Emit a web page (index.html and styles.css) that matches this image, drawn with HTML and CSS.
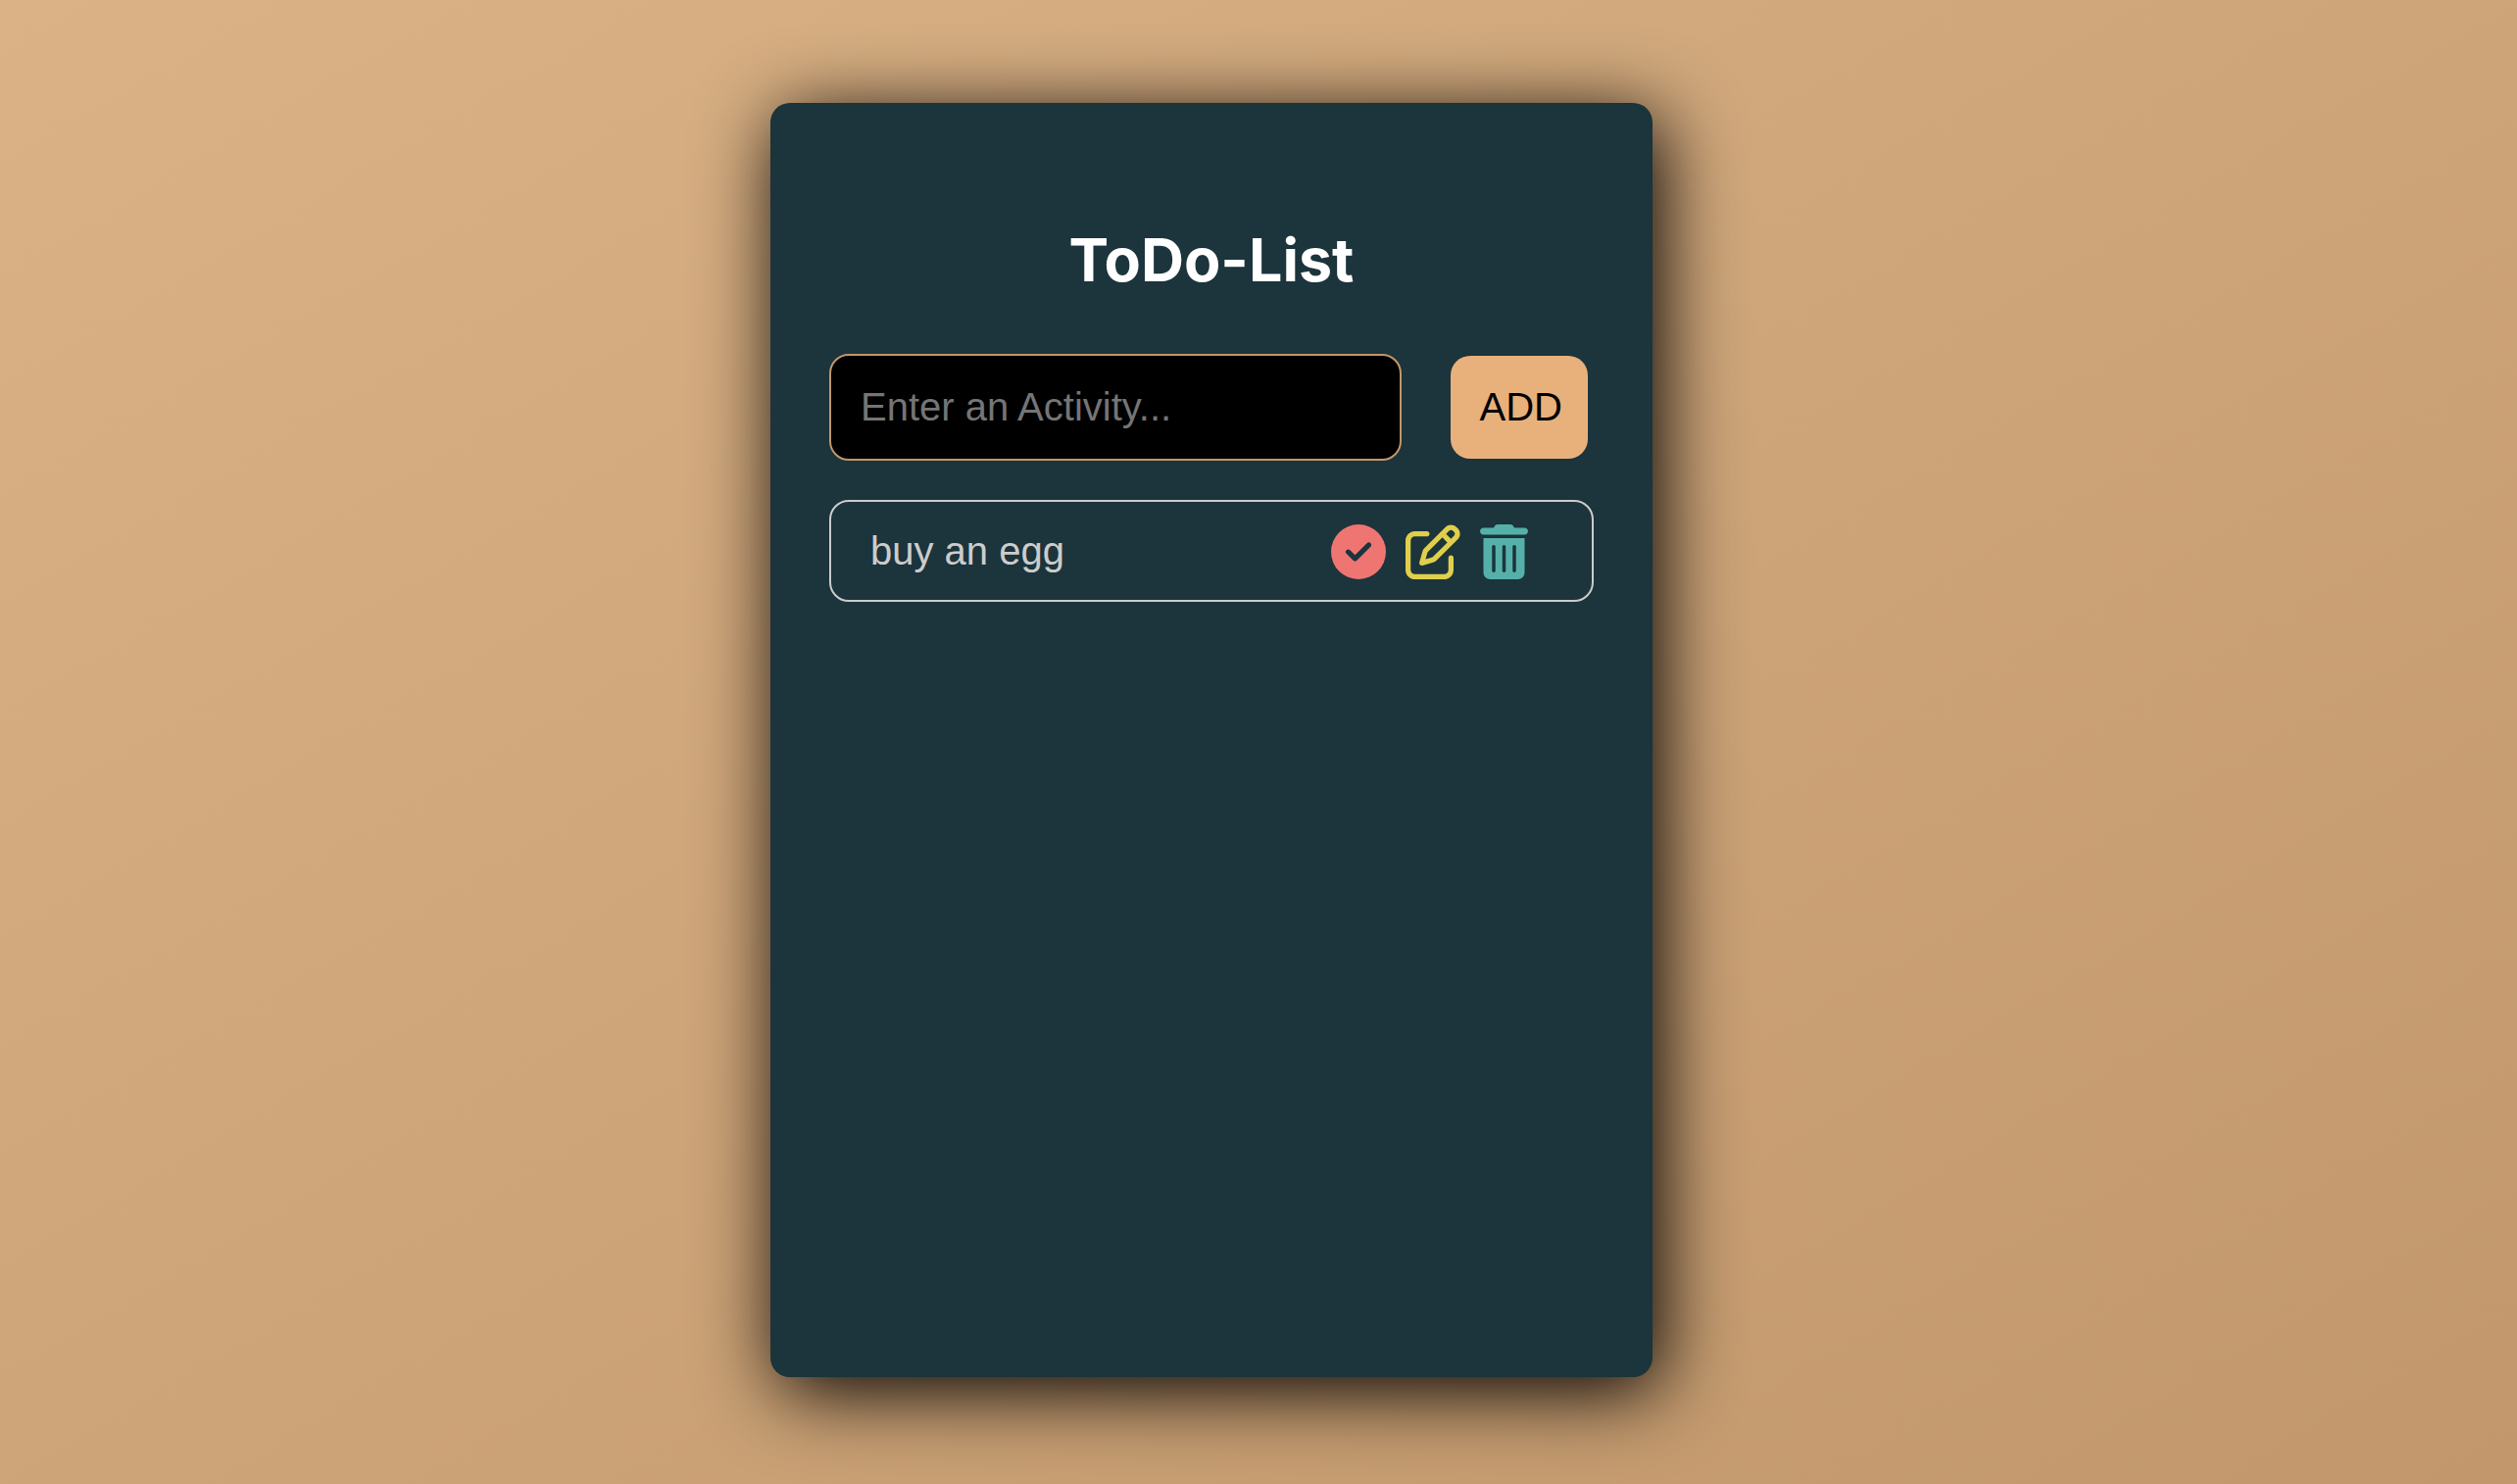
FILE: index.html
```html
<!DOCTYPE html>
<html lang="en">
<head>
  <meta charset="utf-8">
  <meta name="viewport" content="width=device-width, initial-scale=1">
  <title>ToDo-List</title>
  <link rel="stylesheet" href="styles.css">
</head>
<body>
  <main class="card">
    <h1 class="title">ToDo-List</h1>
    <form class="entry">
      <input class="entry-input" type="text" placeholder="Enter an Activity..." aria-label="Activity">
      <button class="entry-add" type="button">ADD</button>
    </form>
    <ul class="list">
      <li class="item">
        <span class="item-text">buy an egg</span>
        <div class="actions">
          <button class="icon icon-done" type="button" aria-label="Complete">
            <svg viewBox="0 0 512 512" aria-hidden="true"><path d="M256 512A256 256 0 1 0 256 0a256 256 0 1 0 0 512zM369 209L241 337c-9.400 9.400-24.600 9.400-33.900 0l-64-64c-9.400-9.400-9.400-24.600 0-33.900s24.600-9.400 33.900 0l47 47L335 175c9.400-9.400 24.600-9.400 33.900 0s9.400 24.600 0 33.900z"/></svg>
          </button>
          <button class="icon icon-edit" type="button" aria-label="Edit">
            <svg viewBox="0 0 512 512" aria-hidden="true"><path d="M441 58.900L453.100 71c9.400 9.400 9.400 24.600 0 33.900L424 134.100 377.900 88 407 58.900c9.400-9.400 24.600-9.400 33.900 0zM209.800 256.200L344 121.900 390.100 168 255.800 302.200c-2.900 2.900-6.500 5-10.400 6.100l-58.500 16.700 16.700-58.500c1.100-3.900 3.200-7.500 6.100-10.400zM373.100 25L175.800 222.200c-8.700 8.700-15 19.400-18.300 31.100l-28.600 100c-2.400 8.400-.1 17.400 6.100 23.600s15.200 8.500 23.600 6.100l100-28.600c11.800-3.400 22.500-9.700 31.100-18.300L487 138.900c28.100-28.100 28.100-73.700 0-101.800L474.900 25C446.800-3.100 401.200-3.100 373.100 25zM88 64C39.400 64 0 103.400 0 152V424c0 48.600 39.400 88 88 88H360c48.600 0 88-39.400 88-88V312c0-13.300-10.700-24-24-24s-24 10.700-24 24V424c0 22.100-17.900 40-40 40H88c-22.100 0-40-17.900-40-40V152c0-22.100 17.900-40 40-40H200c13.300 0 24-10.700 24-24s-10.700-24-24-24H88z"/></svg>
          </button>
          <button class="icon icon-delete" type="button" aria-label="Delete">
            <svg viewBox="0 0 448 512" aria-hidden="true"><path d="M135.200 17.700C140.600 6.800 151.700 0 163.800 0H284.200c12.100 0 23.200 6.800 28.600 17.700L320 32h96c17.700 0 32 14.300 32 32s-14.300 32-32 32H32C14.300 96 0 81.700 0 64S14.300 32 32 32h96l7.200-14.300zM32 128H416V448c0 35.300-28.700 64-64 64H96c-35.300 0-64-28.700-64-64V128zm96 64c-8.800 0-16 7.200-16 16V432c0 8.800 7.200 16 16 16s16-7.200 16-16V208c0-8.800-7.200-16-16-16zm96 0c-8.800 0-16 7.200-16 16V432c0 8.800 7.200 16 16 16s16-7.200 16-16V208c0-8.800-7.200-16-16-16zm96 0c-8.800 0-16 7.200-16 16V432c0 8.800 7.200 16 16 16s16-7.200 16-16V208c0-8.800-7.200-16-16-16z"/></svg>
          </button>
        </div>
      </li>
    </ul>
  </main>
</body>
</html>
```
FILE: styles.css
```css
* {
  box-sizing: border-box;
}

body {
  display: flex;
  justify-content: center;
  min-height: 100vh;
  margin: 0;
  padding: 105px 96px 105px 0;
  background: linear-gradient(to bottom right, #dab286, #c1976b);
  font-family: "Liberation Sans", Arial, sans-serif;
  font-size: 40px;
  line-height: 46px;
}

.card {
  width: 100%;
  max-width: 900px;
  min-height: 1300px;
  align-self: flex-start;
  padding: 120px 60px 60px;
  border-radius: 20px;
  background: #1c343b;
  box-shadow: 8px 14px 80px #000;
}

.title {
  margin: 0 0 56px;
  color: #fff;
  font-family: Inter, sans-serif;
  font-size: 61px;
  font-weight: 700;
  line-height: 80px;
  text-align: center;
}

.entry {
  display: flex;
  align-items: center;
  gap: 50px;
  margin: 0 6px 40px 0;
}

.entry-input {
  flex: 1;
  min-width: 0;
  height: 109px;
  padding: 0 30px;
  border: 2px solid #c1976b;
  border-radius: 20px;
  background: #000;
  color: #ccc;
  font: inherit;
}

.entry-input::placeholder {
  color: #757575;
}

.entry-add {
  height: 105px;
  padding: 0 26px 2px 30px;
  border: 0;
  border-radius: 20px;
  background: #e8b17c;
  color: #000;
  font: inherit;
}

.list {
  margin: 0;
  padding: 0;
  list-style: none;
}

.item {
  display: flex;
  align-items: center;
  height: 104px;
  padding: 0 65px 0 40px;
  border: 2px solid #ccc;
  border-radius: 20px;
  color: #ccc;
}

.item-text {
  flex: 1;
}

.actions {
  display: flex;
  gap: 20px;
  padding-top: 2px;
}

.icon {
  display: flex;
  padding: 0;
  border: 0;
  background: none;
}

.icon svg {
  height: 56px;
  fill: currentColor;
}

.icon-done {
  color: #ee7572;
}

.icon-edit {
  color: #dfcf4c;
}

.icon-delete {
  color: #56b0aa;
}
```
